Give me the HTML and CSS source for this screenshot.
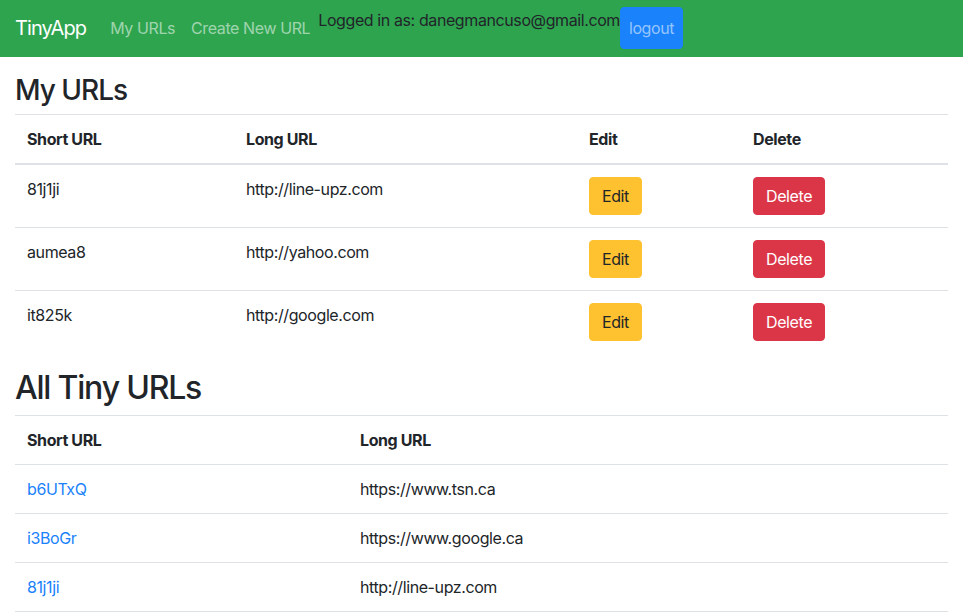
FILE: index.html
```html
<!DOCTYPE html>
<html lang="en">
<head>
<meta charset="utf-8">
<title>TinyApp</title>
<link rel="stylesheet" href="styles.css">
</head>
<body>
<nav class="navbar">
  <a class="brand" href="#">TinyApp</a>
  <div class="nav-links">
    <a class="nav-link" href="#">My URLs</a>
    <a class="nav-link" href="#">Create New URL</a>
  </div>
  <div class="user-nav">
    <span class="user-text">Logged in as: danegmancuso@gmail.com</span>
    <form class="logout-form"><button type="button" class="logout">logout</button></form>
  </div>
</nav>
<main class="content">
  <h3 class="title-small">My URLs</h3>
  <table class="table mine">
    <thead>
      <tr><th class="c-short">Short URL</th><th class="c-long">Long URL</th><th class="c-edit">Edit</th><th>Delete</th></tr>
    </thead>
    <tbody>
      <tr><td>81j1ji</td><td>http://line-upz.com</td><td><button class="btn btn-edit">Edit</button></td><td><button class="btn btn-delete">Delete</button></td></tr>
      <tr><td>aumea8</td><td>http://yahoo.com</td><td><button class="btn btn-edit">Edit</button></td><td><button class="btn btn-delete">Delete</button></td></tr>
      <tr><td>it825k</td><td>http://google.com</td><td><button class="btn btn-edit">Edit</button></td><td><button class="btn btn-delete">Delete</button></td></tr>
    </tbody>
  </table>
  <h2 class="title-big">All Tiny URLs</h2>
  <table class="table all">
    <thead>
      <tr><th class="c-short2">Short URL</th><th>Long URL</th></tr>
    </thead>
    <tbody>
      <tr><td><a class="link" href="#">b6UTxQ</a></td><td>https://www.tsn.ca</td></tr>
      <tr><td><a class="link" href="#">i3BoGr</a></td><td>https://www.google.ca</td></tr>
      <tr><td><a class="link" href="#">81j1ji</a></td><td>http://line-upz.com</td></tr>
    </tbody>
  </table>
</main>
</body>
</html>
```
FILE: styles.css
```css
* { box-sizing: border-box; }
html, body { margin: 0; padding: 0; }
body {
  font-family: Inter, "Noto Sans", "Liberation Sans", sans-serif;
  font-size: 16px;
  line-height: 1.5;
  letter-spacing: -0.4px;
  color: #212529;
  background: #fff;
}
.navbar {
  display: flex;
  align-items: center;
  padding: 7px 16px 8px;
  background: #2ea44f;
}
.brand {
  font-size: 20px;
  line-height: 30px;
  padding: 5px 0;
  margin-right: 16px;
  margin-left: -1px;
  letter-spacing: -0.9px;
  color: #fff;
  text-decoration: none;
}
.nav-links { display: flex; }
.nav-link {
  padding: 8px;
  color: rgba(255,255,255,.55);
  text-decoration: none;
}
.user-nav { display: flex; }
.user-text { line-height: 24px; color: #212529; margin-top: 1px; }
.logout-form { margin: 0; display: flex; }
.logout {
  font: inherit;
  letter-spacing: inherit;
  line-height: 24px;
  padding: 8px 8px;
  border: 1px solid #1a82fb;
  background: #1a82fb;
  color: rgba(255,255,255,.55);
  border-radius: 4px;
}
.content { padding: 17px 15px 0; }
.title-small, .title-big {
  margin: 0 0 8px;
  font-weight: 500;
  line-height: 1.2;
}
.title-small { font-size: 28px; letter-spacing: -1px; margin-bottom: 6px; }
.title-big { font-size: 32px; letter-spacing: -1.2px; }
.table {
  width: 100%;
  border-collapse: collapse;
  margin-bottom: 16px;
}
.table th, .table td {
  padding: 12px;
  text-align: left;
  vertical-align: top;
  border-top: 1px solid #dee2e6;
}
.table th { font-weight: 700; }
.table thead th {
  vertical-align: bottom;
  border-bottom: 2px solid #dee2e6;
}
.all thead th { border-bottom: 1px solid #dee2e6; }
.mine .c-short { width: 219px; }
.mine .c-long { width: 343px; }
.mine .c-edit { width: 164px; }
.all .c-short2 { width: 333px; }
.all tbody tr:last-child td { border-bottom: 1px solid #dee2e6; }
.btn {
  font: inherit;
  letter-spacing: inherit;
  line-height: 24px;
  padding: 6px 12px;
  border: 1px solid transparent;
  border-radius: 4px;
}
.btn-edit { background: #fec12f; border-color: #fec12f; color: #212529; }
.btn-delete { background: #db3648; border-color: #db3648; color: #fff; }
.link { color: #1a82fb; text-decoration: none; }
```
